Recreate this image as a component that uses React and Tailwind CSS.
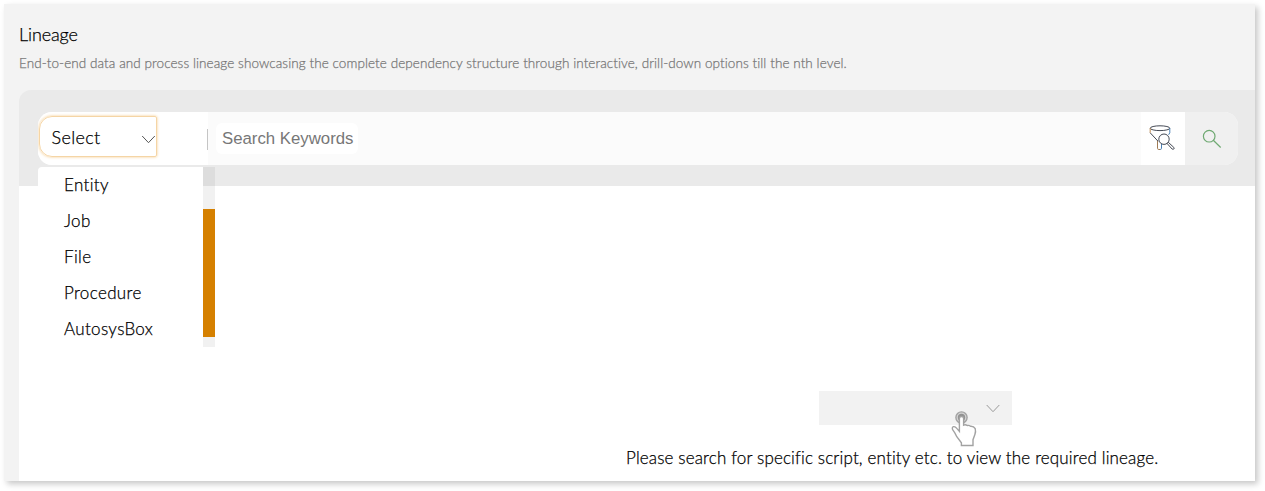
const options = ['Entity', 'Job', 'File', 'Procedure', 'AutosysBox'];

const ChevronIcon = ({ className }) => (
  <svg viewBox="0 0 14 9" fill="none" stroke="currentColor" className={className}>
    <path d="M0.7 1 7 7.7 13.3 1" />
  </svg>
);

const FilterSearchIcon = () => (
  <svg width="26" height="26" viewBox="0 0 26 26" fill="none" stroke="#454a55" strokeWidth="1">
    <ellipse cx="11" cy="3.2" rx="9.8" ry="2.4" />
    <path d="M12.5 19v4.3q0 1.2-1.3 1.2" stroke="#4a80b5" />
    <path d="M8.5 15.5v7.8q0 1.2 1.3 1.2h1.4" stroke="#a07c55" />
    <path d="M1.2 3.2v4.6" stroke="#c08a50" />
    <path d="m1.2 7.8 7.8 8.4" />
    <path d="M20.8 3.2v4.6l-1.2 2" stroke="#4a80b5" />
    <circle cx="15" cy="14.2" r="5.2" />
    <path d="m18.2 18.6 1.2-1.2 5.4 5q.8.9 0 1.6t-1.7 0z" />
  </svg>
);

const SearchIcon = () => (
  <svg width="20" height="20" viewBox="0 0 20 20" fill="none" stroke="#6fa972" strokeWidth="1.2">
    <circle cx="7.2" cy="7.2" r="5.8" />
    <path d="m11.3 11.3 7.4 7.2" />
  </svg>
);

const TapIcon = () => (
  <svg width="26" height="36" viewBox="0 0 26 36" fill="#fff" stroke="#a2a2a2" strokeWidth="1.4">
    <circle cx="10.5" cy="6.5" r="5.6" fill="#d4d4d4" />
    <circle cx="10.5" cy="6.5" r="3" fill="#929292" stroke="#929292" />
    <path d="M8.4 7.5q0-2 2.1-2t2.1 2v6.7q1.8-.9 3.6.3 1.8-.5 3.4.7 3.2-.2 4.6 2.4.8 2.8-.3 5.8l-1.9 5.3v5.8H10.4v-2.8l-4.6-6q-1.6-3.6-4-6.8-1.2-2.4.6-3.2 1.7-.5 3.4 1.7l2.6 3z" />
  </svg>
);

const SearchBar = () => (
  <div className="flex h-[53px] w-[1200px] overflow-hidden rounded-[14px] bg-[#fbfbfb]">
    <div className="flex w-[170px] items-center justify-between bg-white pl-px">
      <button className="mb-1 flex h-[41px] w-[118px] items-center justify-between rounded-l-[13px] rounded-r-xs border border-[#f5d5a5] pl-[11.5px] text-[18px] shadow-[0_0_3px_#f3c98a]">
        <span className="pt-px tracking-[0.35px]">Select</span>
        <ChevronIcon className="mt-[5px] h-[9px] w-[15px] text-[#555]" />
      </button>
      <span className="mt-px h-[21px] w-px bg-[#c5c5c5]" />
    </div>
    <div className="flex flex-1 items-center pl-2">
      <input
        placeholder="Search Keywords"
        className="h-[31px] w-[142px] rounded-md bg-white pl-1.5 font-['Liberation_Sans',sans-serif] text-[16.8px] font-normal outline-none [-webkit-text-stroke:0px] placeholder:text-[#777]"
      />
    </div>
    <button className="flex w-11 items-center justify-center bg-white pr-[3px] pb-px">
      <FilterSearchIcon />
    </button>
    <button className="flex w-[53px] items-center justify-center bg-[#f0f0f0]">
      <SearchIcon />
    </button>
  </div>
);

const TypeMenu = () => (
  <div className="absolute top-[77px] left-[19px] flex h-[180px] w-[177px] overflow-hidden rounded-tl">
    <ul className="flex-1 bg-white pl-[26px] text-[17px] leading-9 tracking-[0.35px]">
      {options.map((option) => (
        <li key={option}>{option}</li>
      ))}
    </ul>
    <div className="w-3 bg-black/[0.055] pt-[42px]">
      <div className="h-32 bg-[#d58000]" />
    </div>
  </div>
);

export default function App() {
  return (
    <div className="h-[491px] overflow-hidden bg-white pt-1 pl-1 font-['Lato','Open_Sans',sans-serif] font-light text-black [-webkit-text-stroke:0.25px] [font-variant-ligatures:none]">
      <main className="flex h-[477px] w-[1251px] flex-col bg-[#f3f3f3] pl-[15px] shadow-[3px_3px_6px_rgba(0,0,0,0.22)]">
        <header className="h-[86px] pt-[18px]">
          <h1 className="text-[18px] leading-6 tracking-[-0.1px]">Lineage</h1>
          <p className="mt-[7px] text-[13.5px] leading-5 tracking-[0.08px] whitespace-nowrap text-[#777]">
            End-to-end data and process lineage showcasing the complete dependency structure through interactive, drill-down options till the nth level.
          </p>
        </header>
        <section className="relative h-24 rounded-tl-xl bg-[#eaeaea] pt-[22px] pl-[19px]">
          <SearchBar />
          <TypeMenu />
        </section>
        <section className="flex flex-1 flex-col bg-white pt-[205px] pl-[607px]">
          <div className="relative ml-[193px] flex h-[34px] w-[193px] items-center justify-end bg-[#f2f2f2] pr-3">
            <ChevronIcon className="h-[9px] w-[14px] text-[#999]" />
            <div className="absolute top-5 left-[132px]">
              <TapIcon />
            </div>
          </div>
          <p className="mt-[21px] text-[17px] leading-6 tracking-[0.15px] whitespace-nowrap">
            Please search for specific script, entity etc. to view the required lineage.
          </p>
        </section>
      </main>
    </div>
  );
}
